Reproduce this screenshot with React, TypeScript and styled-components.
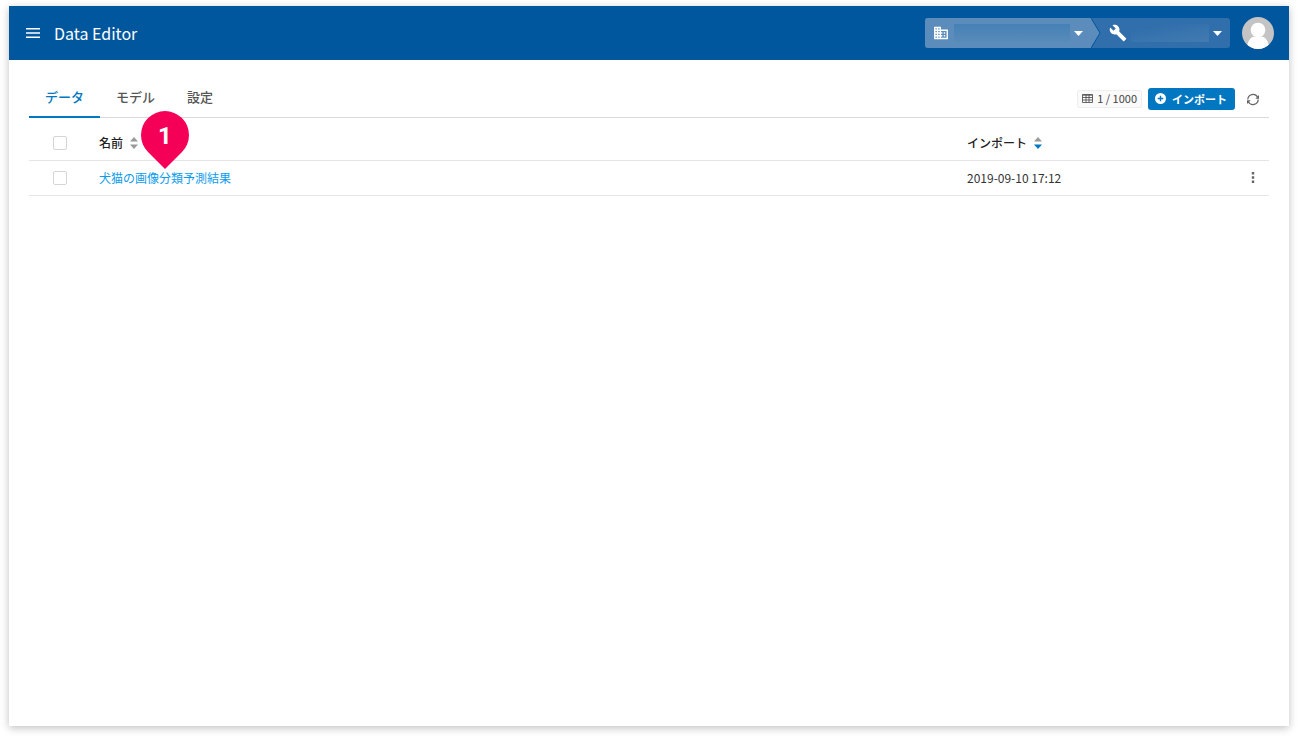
import React from "react";
import styled, { createGlobalStyle, css } from "styled-components";

const GlobalStyle = createGlobalStyle`
  *, *::before, *::after { box-sizing: border-box; }
  body {
    margin: 0;
    background: #fff;
    color: #333;
    font: 12px/18px "Noto Sans CJK JP", sans-serif;
  }
  button { font-family: inherit; border: 0; padding: 0; background: none; cursor: pointer; }
`;

const Page = styled.div`
  min-height: 100vh;
  padding: 6px 9px 12px;
  display: flex;
`;

const AppWindow = styled.div`
  flex: 1;
  display: flex;
  flex-direction: column;
  background: #fff;
  box-shadow: 0 2px 8px rgba(0, 0, 0, 0.25);
`;

const Header = styled.header`
  height: 54px;
  padding: 0 15px 0 16px;
  display: flex;
  align-items: center;
  background: #00579d;
  color: #fff;
`;

const IconButton = styled.button`
  display: flex;
  align-items: center;
  justify-content: center;
  width: 16px;
  height: 20px;
  color: #666;
`;

const MenuButton = styled(IconButton)`
  color: #fff;
`;

const Title = styled.h1`
  margin: 0 auto 0 13px;
  font-size: 16px;
  line-height: 24px;
  font-weight: 400;
`;

const Switcher = styled.nav`
  display: flex;
  height: 30px;
  border-radius: 3px;
  overflow: hidden;
  background: #306fac;
`;

const SwitcherButton = styled.button<{ $lead?: boolean }>`
  display: flex;
  align-items: center;
  gap: 4px;
  color: #fff;
  padding: 0 8px 0 7px;
  ${(p) =>
    p.$lead &&
    css`
      background: #5b8cbb;
    `}
`;

const MaskedName = styled.span<{ $width: number }>`
  width: ${(p) => p.$width}px;
  height: 18px;
  background: linear-gradient(#4581b6, #588bba);
`;

const MaskedProject = styled(MaskedName)`
  background: linear-gradient(170deg, #306fac 20%, #437bb1);
`;

const Avatar = styled.button`
  width: 32px;
  height: 32px;
  margin-left: 12px;
  border-radius: 50%;
  overflow: hidden;
`;

const Content = styled.main`
  position: relative;
  padding: 16px 20px;
`;

const Toolbar = styled.div`
  display: flex;
  justify-content: space-between;
  border-bottom: 1px solid #d9d9d9;
`;

const Tabs = styled.div`
  display: flex;
  margin-bottom: -1px;
`;

const Tab = styled.button<{ $active?: boolean }>`
  height: 42px;
  padding: 2px 16px 0;
  font-size: 13px;
  line-height: 20px;
  font-weight: 500;
  color: ${(p) => (p.$active ? "#0077c0" : "#555")};
  border-bottom: 2px solid ${(p) => (p.$active ? "#0077c0" : "transparent")};
`;

const Actions = styled.div`
  display: flex;
  align-items: center;
  padding: 5px 8px 0 0;
`;

const Quota = styled.span`
  display: inline-flex;
  align-items: center;
  gap: 4px;
  height: 18px;
  padding: 0 4px 2px;
  border: 1px solid #eee;
  border-radius: 2px;
  background: #fafafa;
  color: #444;
  font-size: 11px;
  line-height: 16px;
`;

const ImportButton = styled.button`
  display: inline-flex;
  align-items: center;
  gap: 6px;
  height: 22px;
  margin: 0 10px 0 6px;
  padding: 0 8px 1px 7px;
  border-radius: 3px;
  background: #0077c0;
  color: #fff;
  font-size: 11px;
  line-height: 16px;
  font-weight: 700;
`;

const Table = styled.table`
  width: 100%;
  margin-top: 7px;
  table-layout: fixed;
  border-collapse: collapse;
`;

const Row = styled.tr`
  height: 35px;
  border-bottom: 1px solid #e5e5e5;
`;

const HeadCell = styled.th<{ $width?: string }>`
  width: ${(p) => p.$width ?? "auto"};
  padding: 2px 0 0;
  text-align: left;
  font-weight: 500;
  color: #222;
`;

const Cell = styled.td`
  padding: 0;
`;

const Check = styled.input`
  appearance: none;
  display: block;
  width: 14px;
  height: 14px;
  margin: 0 0 0 24px;
  border: 1px solid #d5d5d5;
  border-radius: 2px;
  background: #fff;
`;

const SortButton = styled.button`
  display: flex;
  align-items: center;
  gap: 7px;
  color: inherit;
  font-size: 12px;
  line-height: 18px;
  font-weight: 500;
`;

const DataLink = styled.a`
  color: #0d9cec;
  text-decoration: none;
`;

const Marker = styled.div`
  position: absolute;
  left: 132px;
  top: 51px;
  width: 48px;
  height: 58px;
  color: #fff;
  font: 700 24px/50px Roboto, sans-serif;
  text-align: center;
`;

const Pin = styled.svg`
  position: absolute;
  inset: 0;
`;

const MarkerNumber = styled.span`
  position: relative;
`;

const Caret = () => (
  <svg width="9" height="5" viewBox="0 0 9 5" aria-hidden="true">
    <path d="M0 0h9L4.500 5z" fill="currentColor" />
  </svg>
);

const SortIcon = ({ descending }: { descending?: boolean }) => (
  <svg width="8" height="12" viewBox="0 0 8 12" aria-hidden="true">
    <path d="M0 4.500 4 0 8 4.500z" fill="#999" />
    <path d="M0 7.500h8L4 12z" fill={descending ? "#0077c0" : "#999"} />
  </svg>
);

export default function App() {
  return (
    <Page>
      <GlobalStyle />
      <AppWindow>
        <Header>
          <MenuButton aria-label="メニュー">
            <svg width="14" height="10" viewBox="0 0 14 10" fill="currentColor">
              <path d="M0 0h14v1.500H0zM0 4.200h14v1.600H0zM0 8.500h14V10H0z" />
            </svg>
          </MenuButton>
          <Title>Data Editor</Title>
          <Switcher>
            <SwitcherButton $lead aria-label="組織">
              <svg width="18" height="18" viewBox="-1 -1 26 26" fill="currentColor">
                <path d="M12 7V3H2v18h20V7H12zM6 19H4v-2h2v2zm0-4H4v-2h2v2zm0-4H4V9h2v2zm0-4H4V5h2v2zm4 12H8v-2h2v2zm0-4H8v-2h2v2zm0-4H8V9h2v2zm0-4H8V5h2v2zm10 12h-8v-2h2v-2h-2v-2h2v-2h-2V9h8v10zm-2-8h-2v2h2v-2zm0 4h-2v2h2v-2z" />
              </svg>
              <MaskedName $width={116} />
              <Caret />
            </SwitcherButton>
            <svg width="11" height="30" viewBox="0 0 11 30" aria-hidden="true">
              <path d="M0 0 9 15 0 30z" fill="#5b8cbb" />
              <path d="M0 0 9 15 0 30" fill="none" stroke="#00579d" />
            </svg>
            <SwitcherButton aria-label="プロジェクト">
              <svg width="18" height="18" viewBox="0 0 24 24" fill="currentColor">
                <path d="M22.7 19l-9.1-9.1c.9-2.3.4-5-1.5-6.9-2-2-5-2.4-7.4-1.3L9 6 6 9 1.6 4.7C.4 7.1.9 10.1 2.9 12.1c1.9 1.9 4.6 2.4 6.9 1.5l9.1 9.1c.4.4 1 .4 1.4 0l2.3-2.3c.5-.4.5-1.1.1-1.4z" />
              </svg>
              <MaskedProject $width={78} />
              <Caret />
            </SwitcherButton>
          </Switcher>
          <Avatar aria-label="アカウント">
            <svg width="32" height="32" viewBox="0 0 32 32">
              <path d="M0 0h32v32H0z" fill="#c4c4c4" />
              <circle cx="16" cy="13" r="7.300" fill="#fff" />
              <path d="M5 32c0-8 4-12.500 8-12.500h6c4 0 8 4.500 8 12.500z" fill="#fff" />
            </svg>
          </Avatar>
        </Header>
        <Content>
          <Toolbar>
            <Tabs role="tablist">
              <Tab role="tab" aria-selected="true" $active>データ</Tab>
              <Tab role="tab" aria-selected="false">モデル</Tab>
              <Tab role="tab" aria-selected="false">設定</Tab>
            </Tabs>
            <Actions>
              <Quota>
                <svg width="11" height="9" viewBox="0 0 11 9" fill="none" stroke="currentColor" strokeWidth=".8">
                  <path d="M.5.5h10v8H.5zM.5 1.200h10M.5 3.500h10M.5 6h10M4 1v7.500M7 1v7.500" />
                </svg>
                1 / 1000
              </Quota>
              <ImportButton>
                <svg width="11" height="11" viewBox="0 0 11 11">
                  <circle cx="5.500" cy="5.500" r="5.500" fill="#fff" />
                  <path d="M5.500 2.700v5.600M2.700 5.500h5.600" stroke="#0077c0" strokeWidth="1.400" />
                </svg>
                インポート
              </ImportButton>
              <IconButton aria-label="更新">
                <svg width="14" height="14" viewBox="0 0 14 14">
                  <path
                    d="M1.800 7.500A5.200 5.200 0 0 1 11.600 5.200M12.200 7.500A5.200 5.200 0 0 1 2.400 9.800"
                    fill="none"
                    stroke="currentColor"
                    strokeWidth="1.200"
                  />
                  <path d="M13 3v3.800H9.300zM1 12V8.200h3.700z" fill="currentColor" />
                </svg>
              </IconButton>
            </Actions>
          </Toolbar>
          <Table>
            <thead>
              <Row>
                <HeadCell $width="70px"><Check type="checkbox" aria-label="すべて選択" /></HeadCell>
                <HeadCell $width="70%"><SortButton>名前<SortIcon /></SortButton></HeadCell>
                <HeadCell><SortButton>インポート<SortIcon descending /></SortButton></HeadCell>
                <HeadCell $width="24px" />
              </Row>
            </thead>
            <tbody>
              <Row>
                <Cell><Check type="checkbox" aria-label="犬猫の画像分類予測結果を選択" /></Cell>
                <Cell><DataLink href="#data">犬猫の画像分類予測結果</DataLink></Cell>
                <Cell>2019-09-10 17:12</Cell>
                <Cell>
                  <IconButton aria-label="操作">
                    <svg width="4" height="11" viewBox="0 0 4 11" fill="currentColor">
                      <path d="M.8 0h2.400v2.400H.8zM.8 4.300h2.400v2.400H.8zM.8 8.600h2.400V11H.8z" />
                    </svg>
                  </IconButton>
                </Cell>
              </Row>
            </tbody>
          </Table>
          <Marker>
            <Pin width="48" height="58" viewBox="0 0 48 58" aria-hidden="true">
              <path d="M24 58 7 41A24 24 0 1 1 41 41z" fill="#f50057" />
            </Pin>
            <MarkerNumber>1</MarkerNumber>
          </Marker>
        </Content>
      </AppWindow>
    </Page>
  );
}
